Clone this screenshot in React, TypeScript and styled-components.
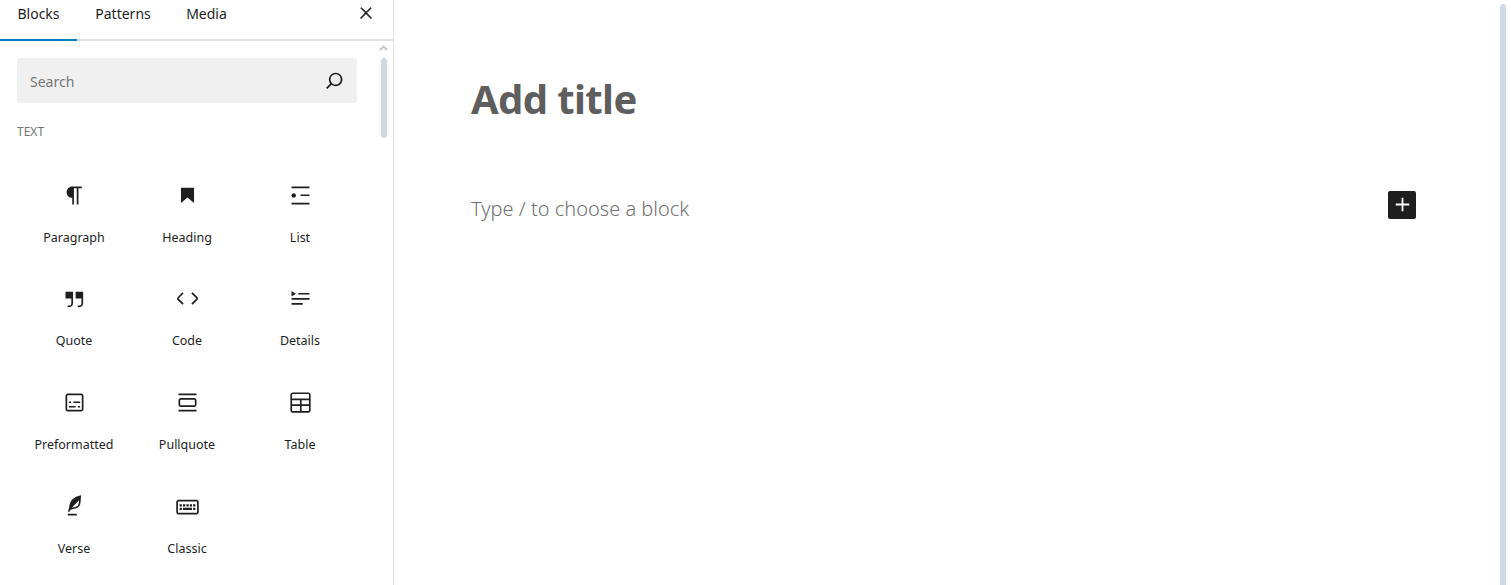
import * as React from 'react';
import styled, { createGlobalStyle } from 'styled-components';

const GlobalStyle = createGlobalStyle`
  html, body {
    margin: 0;
    padding: 0;
    background: #fff;
    overflow: hidden;
  }
  body {
    font-family: "Noto Sans", "Open Sans", sans-serif;
    color: #1e1e1e;
  }
`;

const Page = styled.div`
  display: flex;
  width: 1511px;
  height: 585px;
  overflow: hidden;
`;

const Sidebar = styled.aside`
  flex: 0 0 393px;
  border-right: 1px solid #e0e0e0;
  display: flex;
  flex-direction: column;
`;

const TabBar = styled.div`
  flex: 0 0 41px;
  box-sizing: border-box;
  height: 41px;
  display: flex;
  align-items: flex-start;
  box-shadow: inset 0 -2px 0 #e4e4e4;
`;

const Tab = styled.div<{ $active?: boolean; $width: number }>`
  flex: 0 0 ${(props) => props.$width}px;
  height: 41px;
  box-sizing: border-box;
  padding-top: 4px;
  text-align: center;
  font-size: 14px;
  line-height: 20px;
  color: #1e1e1e;
  border-bottom: 2px solid ${(props) => (props.$active ? '#007cba' : 'transparent')};
`;

const CloseButton = styled.div`
  margin-left: auto;
  margin-right: 18.5px;
  margin-top: 4px;
  width: 18px;
  height: 18px;
  display: flex;
  svg {
    width: 18px;
    height: 18px;
    fill: #1e1e1e;
    stroke: #1e1e1e;
    stroke-width: 0.8;
  }
`;

const Body = styled.div`
  flex: 1;
  min-height: 0;
  display: flex;
`;

const Inserter = styled.div`
  flex: 1;
  min-width: 0;
  padding: 17px 0 0 17px;
`;

const SearchBox = styled.div`
  width: 340px;
  height: 45px;
  box-sizing: border-box;
  padding: 0 9px 0 13px;
  display: flex;
  align-items: center;
  justify-content: space-between;
  background: #f0f0f0;
  border-radius: 2px;
  font-size: 14px;
  color: #757575;
  svg {
    width: 27px;
    height: 27px;
    fill: #1e1e1e;
  }
`;

const SearchLabel = styled.span`
  padding-top: 2px;
`;

const SectionTitle = styled.div`
  margin-top: 21px;
  font-size: 12px;
  line-height: 16px;
  text-transform: uppercase;
  color: #757575;
`;

const BlockGrid = styled.div`
  margin: 41.7px 0 0 0.5px;
  display: grid;
  grid-template-columns: repeat(3, 113px);
  grid-auto-rows: 103.67px;
`;

const BlockItem = styled.div`
  display: flex;
  flex-direction: column;
  align-items: center;
  font-size: 12.5px;
  line-height: 18px;
  color: #1e1e1e;
  svg {
    width: 27px;
    height: 27px;
    fill: #1e1e1e;
    margin-bottom: 20px;
  }
`;

const ScrollTrack = styled.div`
  flex: 0 0 13px;
  margin-right: 3px;
  display: flex;
  flex-direction: column;
  align-items: center;
`;

const ScrollArrow = styled.div`
  margin-top: 4px;
  height: 13px;
  display: flex;
  svg {
    width: 9px;
    height: 6px;
    stroke: #c6c9cc;
    stroke-width: 2;
    fill: none;
  }
`;

const ScrollThumb = styled.div`
  width: 6px;
  height: 80px;
  border-radius: 3px;
  background: #d0dae4;
`;

const Editor = styled.main`
  flex: 1;
  min-width: 0;
  display: flex;
`;

const Canvas = styled.div`
  flex: 1;
  min-width: 0;
  padding: 72px 84px 0 77px;
`;

const PostTitle = styled.h1`
  margin: 0;
  font-size: 40px;
  line-height: 54px;
  font-weight: 700;
  letter-spacing: -0.6px;
  color: #5e5e5e;
`;

const ParagraphRow = styled.div`
  margin-top: 65px;
  display: flex;
  justify-content: space-between;
  align-items: flex-start;
`;

const Placeholder = styled.div`
  font-size: 20px;
  line-height: 28px;
  margin-top: 4px;
  font-weight: 300;
  color: #707070;
`;

const AddButton = styled.div`
  width: 28px;
  height: 27.5px;
  border-radius: 2px;
  background: #1e1e1e;
  display: flex;
  align-items: center;
  justify-content: center;
  svg {
    width: 27px;
    height: 27px;
    fill: #fff;
  }
`;

const PageScrollbar = styled.div`
  flex: 0 0 11px;
  padding-top: 4px;
`;

const PageThumb = styled.div`
  width: 6px;
  height: 620px;
  border-radius: 3px;
  background: #d0dae4;
`;

const blocks: { name: string; icon: React.ReactNode }[] = [
  {
    name: 'Paragraph',
    icon: <path d="m9.99609 14v-.2251l.00391.0001v6.225h1.5v-14.5h2.5v14.5h1.5v-14.5h3v-1.5h-8.50391c-2.76142 0-5 2.23858-5 5 0 2.7614 2.23858 5 5 5z" />,
  },
  { name: 'Heading', icon: <path d="M6.2 5.2v13.4l5.8-4.8 5.8 4.8V5.2z" /> },
  {
    name: 'List',
    icon: <path d="M4 4v1.5h16V4H4zm8 8.5h8V11h-8v1.5zM4 20h16v-1.5H4V20zm4-8c0-1.1-.9-2-2-2s-2 .9-2 2 .9 2 2 2 2-.9 2-2z" />,
  },
  {
    name: 'Quote',
    icon: <path d="M13 6v6h5.2v4c0 .8-.2 1.4-.5 1.7-.6.6-1.6.6-2.5.5h-.3v1.5h.5c1 0 2.3-.1 3.3-1 .6-.6 1-1.6 1-2.8V6H13zm-9 6h5.2v4c0 .8-.2 1.4-.5 1.7-.6.6-1.6.6-2.5.5h-.3v1.5h.5c1 0 2.3-.1 3.3-1 .6-.6 1-1.6 1-2.8V6H4v6z" />,
  },
  {
    name: 'Code',
    icon: <path d="M20.8 10.7l-4.3-4.3-1.1 1.1 4.3 4.3c.1.1.1.3 0 .4l-4.3 4.3 1.1 1.1 4.3-4.3c.7-.8.7-1.9 0-2.6zM4.2 11.8l4.3-4.3-1-1-4.3 4.3c-.7.7-.7 1.8 0 2.5l4.3 4.3 1.1-1.1-4.3-4.3c-.2-.1-.2-.3-.1-.4z" />,
  },
  {
    name: 'Details',
    icon: (
      <>
        <path d="M4 16h10v1.5H4V16Zm0-4.5h16V13H4v-1.5ZM10 7h10v1.5H10V7Z" />
        <path d="m4 5.25 4 2.5-4 2.5v-5Z" />
      </>
    ),
  },
  {
    name: 'Preformatted',
    icon: <path d="M18 4H6c-1.1 0-2 .9-2 2v12c0 1.1.9 2 2 2h12c1.1 0 2-.9 2-2V6c0-1.1-.9-2-2-2zm.5 14c0 .3-.2.5-.5.5H6c-.3 0-.5-.2-.5-.5V6c0-.3.2-.5.5-.5h12c.3 0 .5.2.5.5v12zM7 16.5h6V15H7v1.5zm4-4h6V11h-6v1.5zM9 11H7v1.5h2V11zm6 5.5h2V15h-2v1.5z" />,
  },
  {
    name: 'Pullquote',
    icon: <path d="M18 8H6c-1.1 0-2 .9-2 2v4c0 1.1.9 2 2 2h12c1.1 0 2-.9 2-2v-4c0-1.1-.9-2-2-2zm.5 6c0 .3-.2.5-.5.5H6c-.3 0-.5-.2-.5-.5v-4c0-.3.2-.5.5-.5h12c.3 0 .5.2.5.5v4zM4 4v1.5h16V4H4zm0 16h16v-1.5H4V20z" />,
  },
  {
    name: 'Table',
    icon: <path d="M19 3H5c-1.1 0-2 .9-2 2v14c0 1.1.9 2 2 2h14c1.1 0 2-.9 2-2V5c0-1.1-.9-2-2-2zM5 4.5h14c.3 0 .5.2.5.5v3.5h-15V5c0-.3.2-.5.5-.5zm8 5.5h6.5v3.5H13V10zm-1.5 3.5h-7V10h7v3.5zm-7 5.5v-4h7v4.5H5c-.3 0-.5-.2-.5-.5zm14.5.5h-6V15h6.5v4c0 .3-.2.5-.5.5z" />,
  },
  {
    name: 'Verse',
    icon: <path d="M17.8 2l-.9.3c-.1 0-3.6 1-5.2 2.1C10 5.5 9.3 6.5 8.9 7.1c-.6.9-1.7 4.7-1.7 6.3l-.9 2.3c-.2.4 0 .8.4 1 .1 0 .2.1.3.1.3 0 .6-.2.7-.5l.6-1.5c.3 0 .7-.1 1.2-.2.7-.1 1.4-.3 2.2-.5.8-.2 1.6-.5 2.4-.8.7-.3 1.4-.7 1.9-1.2s.8-1.2 1-1.9c.2-.7.3-1.6.4-2.4.1-.8.1-1.7.2-2.5 0-.8.1-1.5.2-2.1V2zm-1.9 5.6c-.1.8-.2 1.5-.3 2.1-.2.6-.4 1-.6 1.3-.3.3-.8.6-1.4.9-.7.3-1.4.5-2.2.8-.6.2-1.3.3-1.8.4L15 7.5c.3-.3.6-.7 1-1.1 0 .4 0 .8-.1 1.2zM6 20h8v-1.5H6V20z" />,
  },
  {
    name: 'Classic',
    icon: <path d="M20 6H4c-1.1 0-2 .9-2 2v9c0 1.1.9 2 2 2h16c1.1 0 2-.9 2-2V8c0-1.1-.9-2-2-2zm.5 11c0 .3-.2.5-.5.5H4c-.3 0-.5-.2-.5-.5V8c0-.3.2-.5.5-.5h16c.3 0 .5.2.5.5v9zM10 10H8v2h2v-2zm-5 2h2v-2H5v2zm8-2h-2v2h2v-2zm-5 5h8v-2H8v2zm6-3h2v-2h-2v2zm3 0h2v-2h-2v2zm0 3h2v-2h-2v2zM5 15h2v-2H5v2z" />,
  },
];

export default function App() {
  return (
    <>
      <GlobalStyle />
      <Page>
        <Sidebar>
          <TabBar>
            <Tab $active $width={77}>Blocks</Tab>
            <Tab $width={92}>Patterns</Tab>
            <Tab $width={75}>Media</Tab>
            <CloseButton>
              <svg viewBox="0 0 24 24">
                <path d="M13 11.8l6.1-6.3-1-1-6.1 6.2-6.1-6.2-1 1 6.1 6.3-6.5 6.7 1 1 6.5-6.6 6.5 6.6 1-1z" />
              </svg>
            </CloseButton>
          </TabBar>
          <Body>
            <Inserter>
              <SearchBox>
                <SearchLabel>Search</SearchLabel>
                <svg viewBox="0 0 24 24">
                  <path d="M13 5c-3.3 0-6 2.7-6 6 0 1.4.5 2.7 1.3 3.7l-3.8 3.8 1.1 1.1 3.8-3.8c1 .8 2.3 1.3 3.7 1.3 3.3 0 6-2.7 6-6S16.3 5 13 5zm0 10.5c-2.5 0-4.5-2-4.5-4.5s2-4.5 4.5-4.5 4.5 2 4.5 4.5-2 4.5-4.5 4.5z" />
                </svg>
              </SearchBox>
              <SectionTitle>Text</SectionTitle>
              <BlockGrid>
                {blocks.map((block) => (
                  <BlockItem key={block.name}>
                    <svg viewBox="0 0 24 24">{block.icon}</svg>
                    {block.name}
                  </BlockItem>
                ))}
              </BlockGrid>
            </Inserter>
            <ScrollTrack>
              <ScrollArrow>
                <svg viewBox="0 0 9 6">
                  <path d="M1 5l3.5-3.5L8 5" />
                </svg>
              </ScrollArrow>
              <ScrollThumb />
            </ScrollTrack>
          </Body>
        </Sidebar>
        <Editor>
          <Canvas>
            <PostTitle>Add title</PostTitle>
            <ParagraphRow>
              <Placeholder>Type / to choose a block</Placeholder>
              <AddButton>
                <svg viewBox="0 0 24 24">
                  <path d="M18 11.2h-5.2V6h-1.6v5.2H6v1.6h5.2V18h1.6v-5.2H18z" />
                </svg>
              </AddButton>
            </ParagraphRow>
          </Canvas>
          <PageScrollbar>
            <PageThumb />
          </PageScrollbar>
        </Editor>
      </Page>
    </>
  );
}
